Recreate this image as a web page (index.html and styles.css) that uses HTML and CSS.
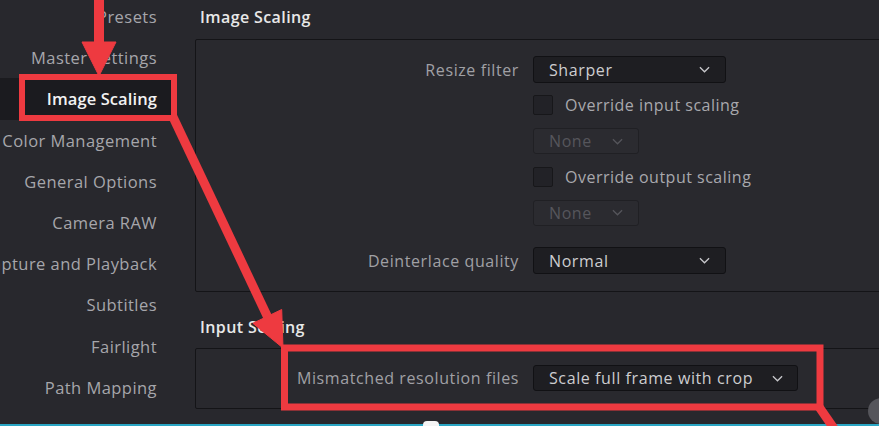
FILE: index.html
```html
<!DOCTYPE html>
<html>
<head>
<meta charset="utf-8">
<link rel="stylesheet" href="styles.css">
</head>
<body>
<div class="page">
  <aside class="sidebar">
    <ul class="nav">
      <li class="nav-item">Presets</li>
      <li class="nav-item">Master Settings</li>
      <li class="nav-item active">Image Scaling</li>
      <li class="nav-item">Color Management</li>
      <li class="nav-item">General Options</li>
      <li class="nav-item">Camera RAW</li>
      <li class="nav-item">Capture and Playback</li>
      <li class="nav-item">Subtitles</li>
      <li class="nav-item">Fairlight</li>
      <li class="nav-item">Path Mapping</li>
    </ul>
  </aside>
  <main class="main">
    <h2 class="section-title first">Image Scaling</h2>
    <section class="panel panel-scaling">
      <div class="row r1">
        <span class="label">Resize filter</span>
        <div class="select wide"><span>Sharper</span><svg class="chev" viewBox="0 0 12 7"><path d="M1 1 L6 6 L11 1" /></svg></div>
      </div>
      <div class="row r2">
        <span class="label"></span>
        <div class="check-line"><span class="checkbox"></span><span class="check-text">Override input scaling</span></div>
      </div>
      <div class="row r3">
        <span class="label"></span>
        <div class="select small disabled"><span>None</span><svg class="chev" viewBox="0 0 12 7"><path d="M1 1 L6 6 L11 1" /></svg></div>
      </div>
      <div class="row r4">
        <span class="label"></span>
        <div class="check-line"><span class="checkbox"></span><span class="check-text">Override output scaling</span></div>
      </div>
      <div class="row r5">
        <span class="label"></span>
        <div class="select small disabled"><span>None</span><svg class="chev" viewBox="0 0 12 7"><path d="M1 1 L6 6 L11 1" /></svg></div>
      </div>
      <div class="row r6">
        <span class="label">Deinterlace quality</span>
        <div class="select wide"><span>Normal</span><svg class="chev" viewBox="0 0 12 7"><path d="M1 1 L6 6 L11 1" /></svg></div>
      </div>
    </section>
    <h2 class="section-title second">Input Scaling</h2>
    <section class="panel panel-input">
      <div class="row">
        <span class="label">Mismatched resolution files</span>
        <div class="select xwide"><span>Scale full frame with crop</span><svg class="chev" viewBox="0 0 12 7"><path d="M1 1 L6 6 L11 1" /></svg></div>
      </div>
    </section>
  </main>
  <div class="bottom-bar"><span class="tab-tip"></span><span class="knob"></span></div>
  <svg class="annot" width="879" height="426" viewBox="0 0 879 426">
    <g fill="#ee3a40" stroke="#ee3a40">
      <line x1="99" y1="-5" x2="99" y2="50" stroke-width="10" />
      <polygon points="82,42 116,42 99,76" stroke-width="1" stroke-linejoin="round" />
      <line x1="173" y1="117" x2="270" y2="322" stroke-width="9" />
      <polygon points="252.9,323.3 281.7,309.5 283,348" stroke-width="1" stroke-linejoin="round" />
      <line x1="817" y1="404" x2="842" y2="440" stroke-width="9" />
    </g>
    <g fill="none" stroke="#ee3a40">
      <rect x="22" y="77" width="152" height="41" stroke-width="6" />
      <rect x="284.5" y="348" width="535.5" height="59" stroke-width="7" />
    </g>
  </svg>
</div>
</body>
</html>
```

FILE: styles.css
```css
* { box-sizing: border-box; }
html, body {
  margin: 0;
  padding: 0;
  width: 879px;
  height: 426px;
  overflow: hidden;
  background: #28282d;
  font-family: "Open Sans", "Noto Sans", "DejaVu Sans", sans-serif;
}
.page {
  position: relative;
  width: 879px;
  height: 426px;
  display: flex;
  overflow: hidden;
}
.sidebar {
  width: 176px;
  flex: none;
  overflow: hidden;
}
.nav {
  list-style: none;
  margin: -4px 0 0 0;
  padding: 0;
}
.nav-item {
  height: 41.2px;
  display: flex;
  align-items: center;
  justify-content: flex-end;
  padding-right: 19px;
  font-size: 16.5px;
  letter-spacing: 0.45px;
  color: #a6a6ab;
  white-space: nowrap;
}
.nav-item.active {
  background: #1b1b1f;
  color: #f2f2f2;
  font-weight: 600;
  letter-spacing: 0.1px;
}
.main {
  flex: 1;
  margin-left: 19px;
  margin-right: -12px;
  display: flex;
  flex-direction: column;
}
.section-title {
  margin: 0;
  padding-left: 5px;
  height: 22px;
  line-height: 22px;
  font-size: 16px;
  font-weight: 600;
  letter-spacing: 0.4px;
  color: #e8e8e8;
}
.section-title.first { margin-top: 6px; margin-bottom: 11px; }
.section-title.second { margin-top: 24px; margin-bottom: 10px; }
.panel {
  border: 1px solid #141417;
  border-radius: 2px;
  background: #29292e;
}
.panel-scaling {
  height: 253px;
  padding-top: 16px;
  display: flex;
  flex-direction: column;
}
.panel-input {
  height: 61px;
  padding-top: 16px;
}
.row {
  display: grid;
  grid-template-columns: 323px auto;
  column-gap: 14px;
  align-items: center;
}
.r1 { height: 27px; }
.r2 { height: 20px; margin-top: 11px; }
.r3 { height: 26px; margin-top: 14px; }
.r4 { height: 21px; margin-top: 12px; }
.r5 { height: 27px; margin-top: 12px; }
.r6 { height: 27px; margin-top: 21px; }
.label {
  text-align: right;
  font-size: 16px;
  letter-spacing: 0.6px;
  color: #a0a0a5;
  white-space: nowrap;
}
.select {
  height: 27px;
  display: flex;
  align-items: center;
  justify-content: space-between;
  padding: 0 15px 0 15px;
  background: #1e1e22;
  border: 1px solid #111114;
  border-radius: 3px;
  font-size: 16px;
  letter-spacing: 0.6px;
  color: #cdcdd0;
  white-space: nowrap;
}
.select.wide { width: 193px; }
.select.small { width: 106px; height: 26px; }
.select.xwide { width: 265px; padding-right: 14px; height: 26px; }
.select.disabled {
  background: #2b2b30;
  border-color: #202024;
  color: #56565c;
}
.chev {
  width: 11px;
  height: 7px;
  flex: none;
  fill: none;
  stroke: #c8c8cc;
  stroke-width: 1.4;
}
.select.disabled .chev { stroke: #55555b; }
.check-line {
  display: flex;
  align-items: center;
  gap: 12px;
}
.checkbox {
  width: 20px;
  height: 20px;
  flex: none;
  background: #222227;
  border: 1px solid #17171a;
  border-radius: 2px;
}
.check-text {
  font-size: 16px;
  letter-spacing: 0.5px;
  color: #a8a8ad;
  white-space: nowrap;
}
.bottom-bar {
  position: absolute;
  left: 0;
  right: 0;
  bottom: 0;
  height: 2px;
  background: #2aa6c4;
}
.tab-tip {
  position: absolute;
  left: 423px;
  bottom: 0;
  width: 16px;
  height: 5px;
  background: #f4f4f4;
  border-radius: 4px 4px 0 0;
}
.knob {
  position: absolute;
  left: 868px;
  bottom: 2px;
  width: 26px;
  height: 26px;
  border-radius: 50%;
  background: #55555b;
}
.annot {
  position: absolute;
  left: 0;
  top: 0;
  pointer-events: none;
}
```
